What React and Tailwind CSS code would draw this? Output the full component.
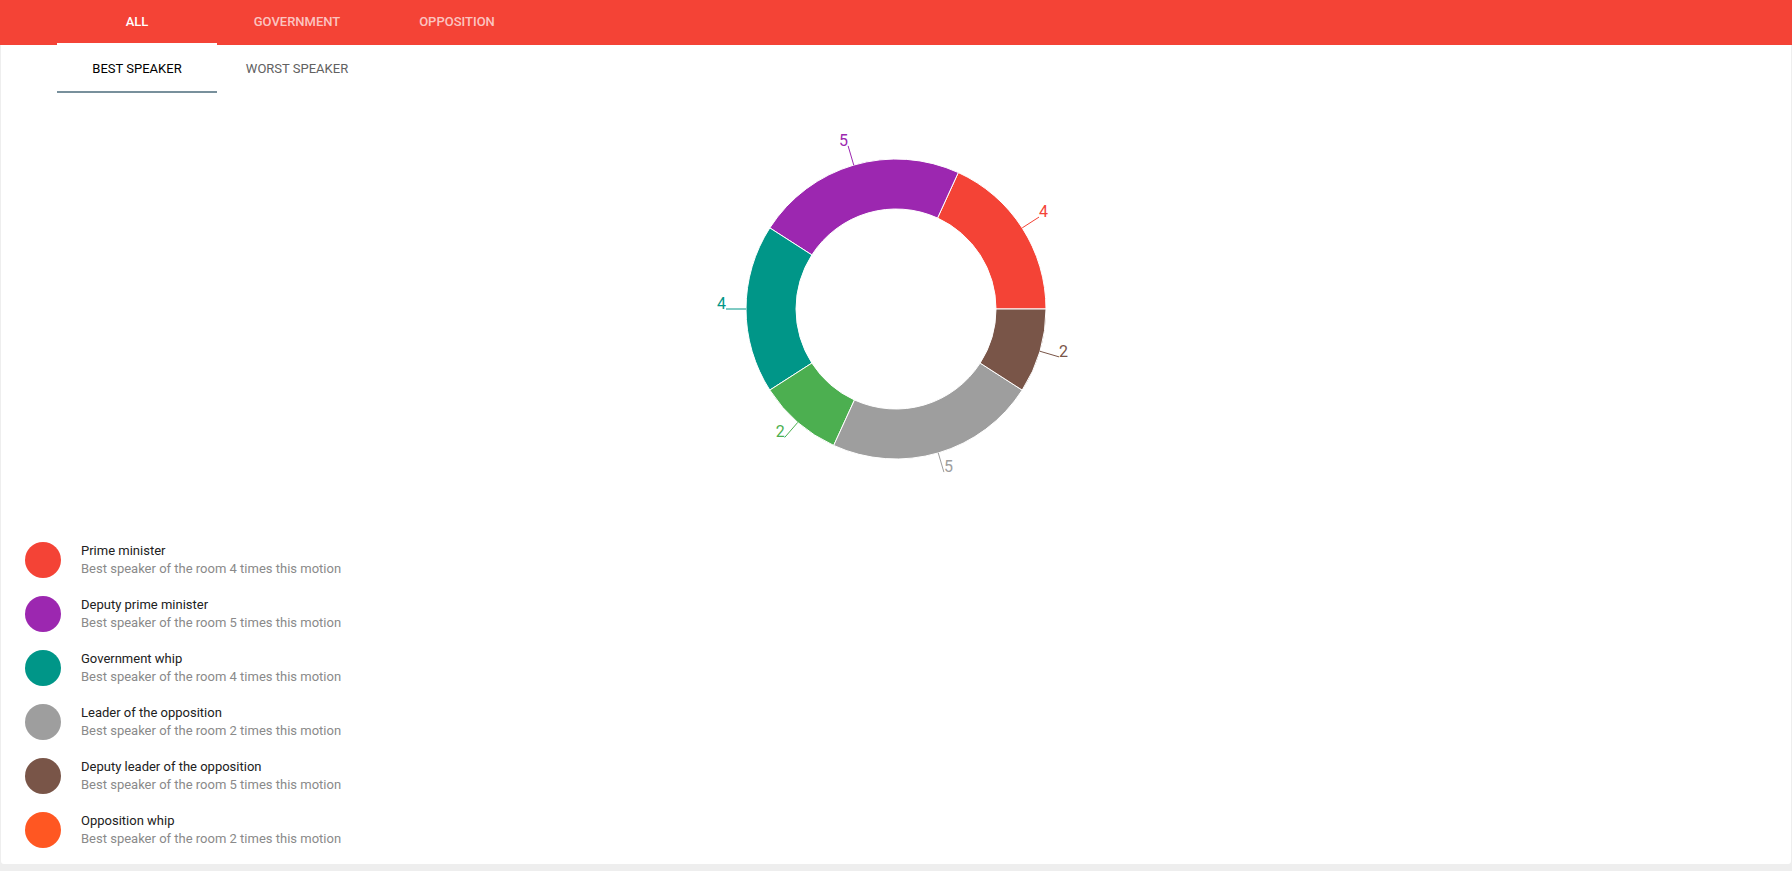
const TOP_TABS = ['All', 'Government', 'Opposition']
const SUB_TABS = ['Best speaker', 'Worst speaker']

// chart order follows the pie data, legend order follows the speaker list
const SLICES = [
  { value: 4, color: '#f44336' },
  { value: 5, color: '#9c27b0' },
  { value: 4, color: '#009688' },
  { value: 2, color: '#4caf50' },
  { value: 5, color: '#9e9e9e' },
  { value: 2, color: '#795548' },
]

const SPEAKERS = [
  { name: 'Prime minister', times: 4, color: '#f44336' },
  { name: 'Deputy prime minister', times: 5, color: '#9c27b0' },
  { name: 'Government whip', times: 4, color: '#009688' },
  { name: 'Leader of the opposition', times: 2, color: '#9e9e9e' },
  { name: 'Deputy leader of the opposition', times: 5, color: '#795548' },
  { name: 'Opposition whip', times: 2, color: '#ff5722' },
]

const CX = 200
const CY = 200
const R = 150
const r = 100

function pt(radius, deg) {
  const a = (deg * Math.PI) / 180
  return [CX + radius * Math.cos(a), CY - radius * Math.sin(a)]
}

function arc(start, end) {
  const [x1, y1] = pt(R, start)
  const [x2, y2] = pt(R, end)
  const [x3, y3] = pt(r, end)
  const [x4, y4] = pt(r, start)
  const large = end - start > 180 ? 1 : 0
  return `M${x1} ${y1} A${R} ${R} 0 ${large} 0 ${x2} ${y2} L${x3} ${y3} A${r} ${r} 0 ${large} 1 ${x4} ${y4} Z`
}

function Donut() {
  const total = SLICES.reduce((s, d) => s + d.value, 0)
  let start = 0
  const parts = SLICES.map(d => {
    const sweep = (d.value / total) * 360
    const p = { ...d, start, end: start + sweep, mid: start + sweep / 2 }
    start += sweep
    return p
  })

  return (
    <svg width="400" height="400" viewBox="0 0 400 400" className="overflow-visible">
      {parts.map((p, i) => (
        <path key={i} d={arc(p.start, p.end)} fill={p.color} stroke="#fff" strokeWidth="1" />
      ))}
      {parts.map((p, i) => {
        const [x1, y1] = pt(R, p.mid)
        const [x2, y2] = pt(R + 20, p.mid)
        return (
          <g key={i}>
            <path d={`M${x1},${y1}L${x2},${y2}`} stroke={p.color} fill="none" strokeWidth="1" />
            <text
              x={x2}
              y={y2}
              fill={p.color}
              textAnchor={x2 > CX ? 'start' : 'end'}
              style={{ fontSize: 16, fontFamily: 'Roboto, sans-serif' }}
            >
              {p.value}
            </text>
          </g>
        )
      })}
    </svg>
  )
}

export default function App() {
  return (
    <div className="h-[871px] bg-[#eeeeee] font-['Roboto',sans-serif] overflow-hidden">
      <header className="h-[45px] bg-[#f44336] flex pl-[57px]">
        {TOP_TABS.map((t, i) => (
          <div
            key={t}
            className={`w-[160px] flex flex-col text-[13px] font-medium uppercase ${i === 0 ? 'text-white' : 'text-white/70'}`}
          >
            <div className="flex-1 flex items-center justify-center">{t}</div>
            <div className={`h-[2px] ${i === 0 ? 'bg-white' : ''}`} />
          </div>
        ))}
      </header>

      <main className="mx-px h-[819px] bg-white rounded-b-[3px] flex flex-col">
        <nav className="h-[48px] flex pl-[56px]">
          {SUB_TABS.map((t, i) => (
            <div
              key={t}
              className={`w-[160px] flex flex-col text-[13px] uppercase ${i === 0 ? 'text-black' : 'text-[#616161]'}`}
            >
              <div className="flex-1 flex items-center justify-center pt-0.5">{t}</div>
              <div className={`h-[2px] ${i === 0 ? 'bg-[#78909c]' : ''}`} />
            </div>
          ))}
        </nav>

        <div className="mt-4 flex justify-center">
          <Donut />
        </div>

        <ul className="mt-6 flex flex-col pl-6">
          {SPEAKERS.map(s => (
            <li key={s.name} className="h-[54px] flex items-center gap-5">
              <span className="w-9 h-9 rounded-full shrink-0" style={{ backgroundColor: s.color }} />
              <div className="flex flex-col leading-[18px] text-[13px]">
                <span className="text-[#212121]">{s.name}</span>
                <span className="text-[#8a8a8a]">
                  Best speaker of the room {s.times} times this motion
                </span>
              </div>
            </li>
          ))}
        </ul>
      </main>
    </div>
  )
}
